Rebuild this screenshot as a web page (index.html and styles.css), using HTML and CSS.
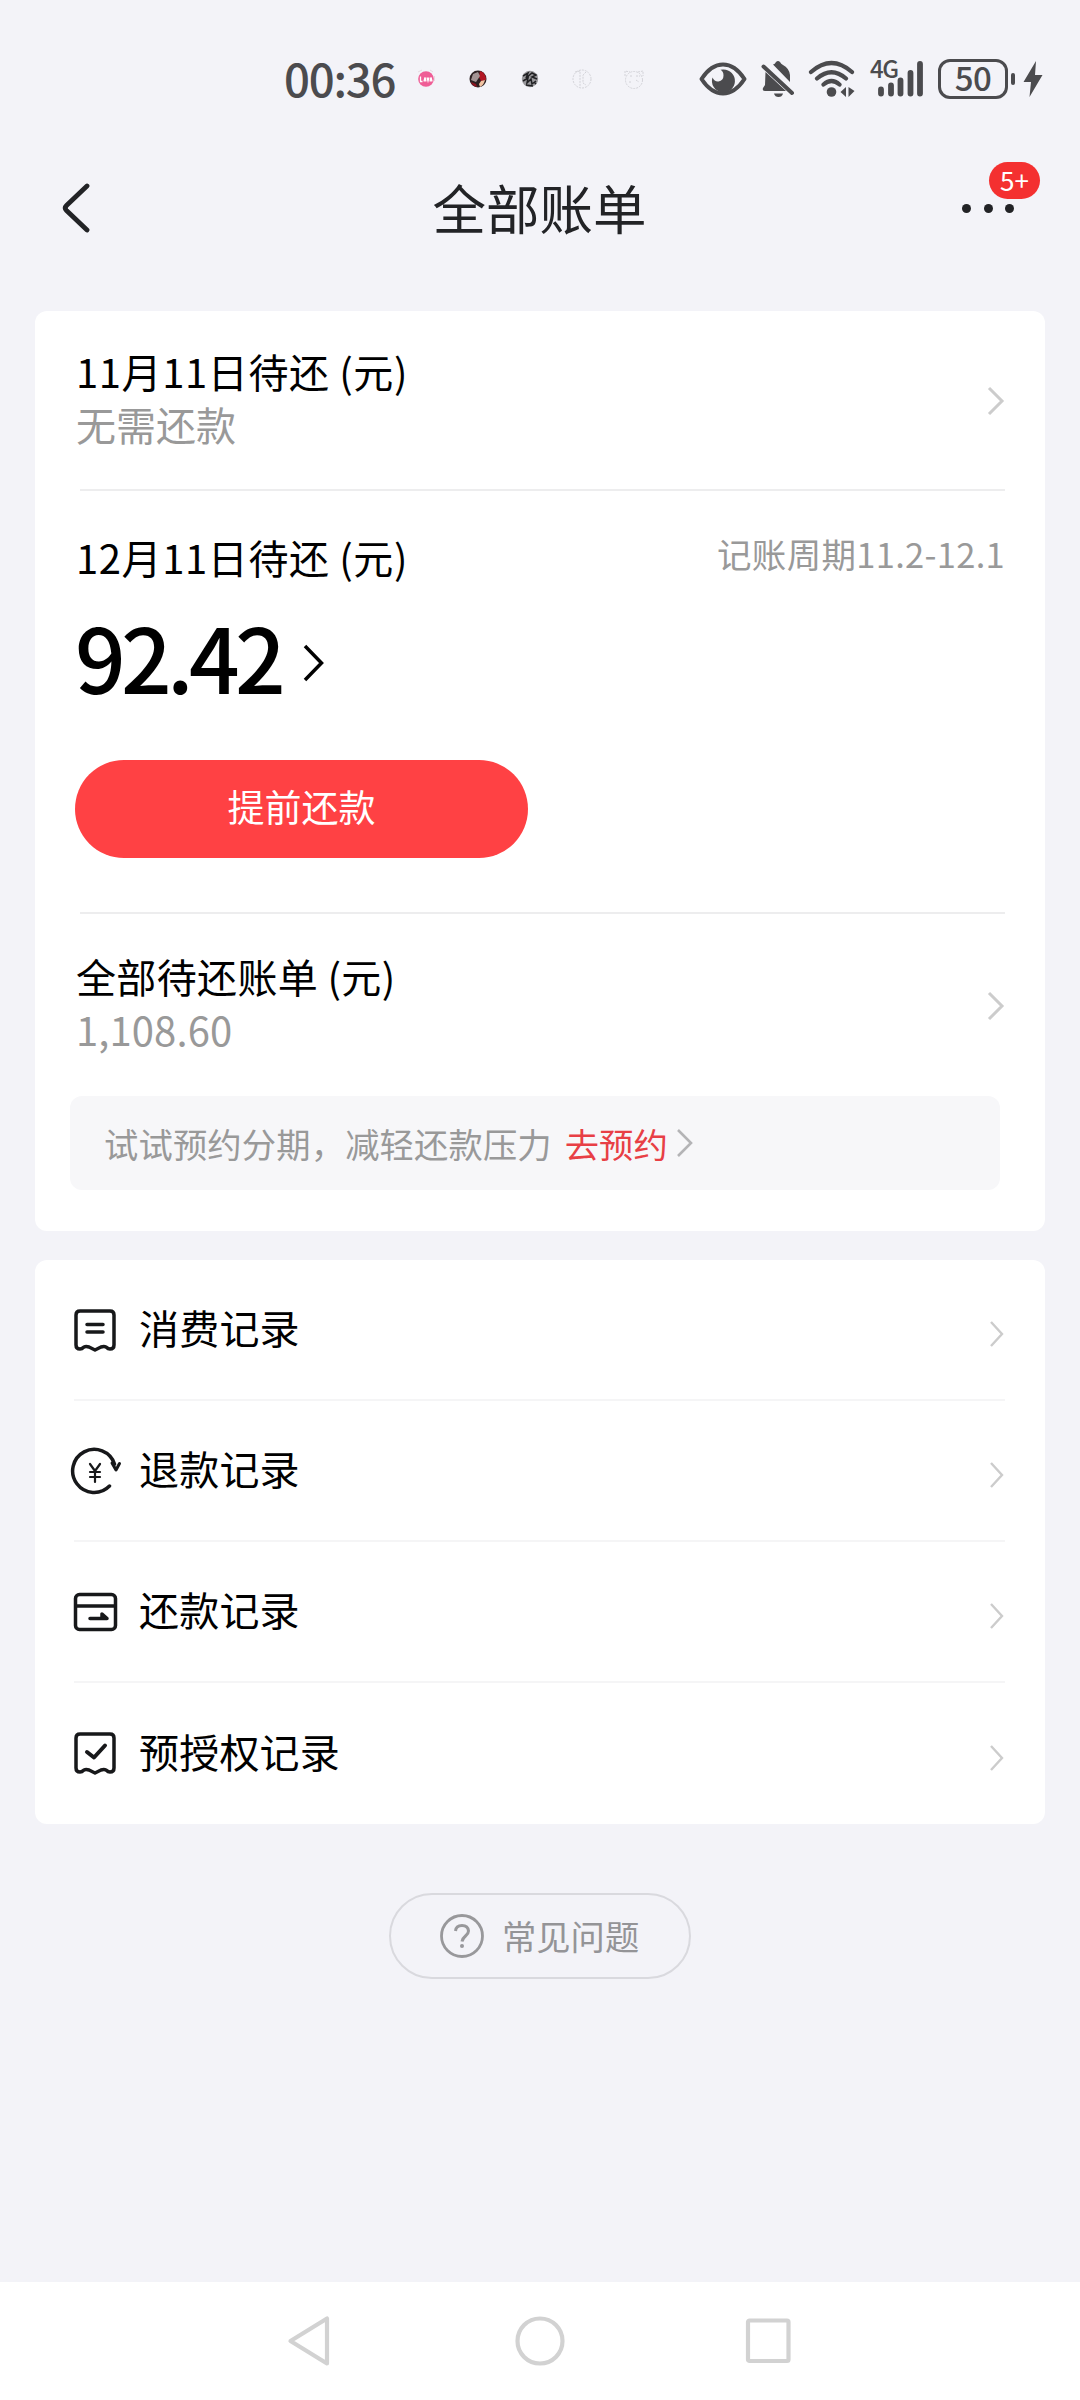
FILE: index.html
```html
<!DOCTYPE html>
<html lang="zh-CN">
<head>
<meta charset="utf-8">
<title>全部账单</title>
<link rel="stylesheet" href="styles.css">
</head>
<body>
<div class="screen">
  <div class="status">
    <div class="clock">00:36</div>
    <div class="notices">
      <svg width="20" height="20" viewBox="0 0 20 20"><circle cx="10" cy="10" r="7.8" fill="#ef5d96"/><path d="M4.500 7.500v5h2M8 12.500l1-4 1 4M11 8.500l1 3.500 1-3.500M14 12.500l1-4 1 4" fill="none" stroke="#fff" stroke-width="1.300"/><path d="M2 3l4-2M14 1l3 2M18.500 7v5" stroke="#e7d7e0"/></svg>
      <svg width="20" height="20" viewBox="0 0 20 20"><circle cx="10" cy="10" r="8.500" fill="#2c2022"/><path d="M12 2a8.500 8.500 0 0 1 6 9l-5 1-2-4z" fill="#b31624"/><path d="M5 5l5-2 2 4-4 6-5-2z" fill="#a39494"/><path d="M3 13l5 2 1 3q-5-1-6-5z" fill="#8d1420"/><path d="M13 12l4-1q-1 5-5 7l-1-3z" fill="#f2c3a2"/></svg>
      <svg width="20" height="20" viewBox="0 0 20 20"><circle cx="10" cy="10" r="8.200" fill="#98979b"/><path d="M3 7l5-3-2 5 6-5 4 2-4 2 5 2M3 12l5-3-1 5 4-4 1 5 4-3M6 16l7 1M14 13l2 2" fill="none" stroke="#202023" stroke-width="1.500"/></svg>
      <svg width="20" height="20" viewBox="0 0 20 20"><g fill="none" stroke="#cfcfd5" stroke-width=".9" stroke-dasharray="2 1"><circle cx="10" cy="10" r="9"/><path d="M3 3l5-1v16M14 3l-3 3v8l3 2"/></g></svg>
      <svg width="20" height="20" viewBox="0 0 20 20"><g fill="none" stroke="#cfcfd5" stroke-width=".9" stroke-dasharray="2 1"><circle cx="10" cy="11" r="8.500"/><path d="M1 7V2l5 1M14 3l5-1v5M6 7h3M12 7h4M5 13h3M12 11l3 2"/></g></svg>
    </div>
    <svg class="eye" width="48" height="36" viewBox="0 0 48 36"><path d="M2.500 18Q12 3.500 24 3.500T45.500 18Q36 32.500 24 32.500T2.500 18z" fill="none" stroke="#4b4b4e" stroke-width="4" stroke-linejoin="round"/><path d="M24 8.500a11.500 11.500 0 1 1-10.500 8q2 4.500 6 4 5-1 5-6 0-4-3-5.700z" fill="#4b4b4e"/></svg>
    <svg class="bell" width="34" height="38" viewBox="0 0 34 38"><g fill="#4b4b4e"><path d="M4.500 12L25 31H4Q1 31 2 28L4 25z"/><path d="M12 4.500Q14 4 15 2q2-2 4 0 1 2 3 3 6 3 7 10v7z"/><path d="M13 33.500h9q-1 3.500-4.500 3.500T13 33.500z"/></g><path d="M2.500 6.500L31 33" stroke="#4b4b4e" stroke-width="4" stroke-linecap="round"/></svg>
    <svg class="wifi" width="48" height="38" viewBox="0 0 48 38"><g fill="none" stroke="#4b4b4e" stroke-width="4.200" stroke-linecap="round"><path d="M3 12Q23.500-6 44 12M9 18.500Q23.500 6 38 18.500M15.500 24.500Q23.500 17.500 31.500 24.500"/></g><circle cx="23.500" cy="32" r="4.800" fill="#4b4b4e"/><path d="M38 27v10l-5.500-5zM40.500 27l6 4-6 6z" fill="#4b4b4e"/></svg>
    <div class="signal">
      <span class="net">4G</span>
      <svg width="50" height="38" viewBox="0 0 50 38"><path d="M8 29.500v4M18 25.500v8M27.500 20.500v13M37.500 13v20.500M47 4v29.500" stroke="#4b4b4e" stroke-width="5.800" stroke-linecap="round"/></svg>
    </div>
    <div class="battery">50</div>
    <div class="nub"></div>
    <svg class="bolt" width="20" height="38" viewBox="0 0 20 38"><path d="M13 1L.5 22H8L6.500 37 19.500 15H12z" fill="#4b4b4e"/></svg>
  </div>

  <div class="header">
    <svg class="back" width="28" height="50" viewBox="0 0 28 50"><path d="M25 3L4.500 22.500Q2 25 4.500 27.500L25 47" fill="none" stroke="#222326" stroke-width="4.800" stroke-linecap="round"/></svg>
    <h1>全部账单</h1>
    <div class="more">
      <i></i><i></i><i></i>
      <span class="badge">5+</span>
    </div>
  </div>

  <div class="card bills">
    <div class="row first">
      <div><p class="label">11月11日待还 (元)</p><p class="sub">无需还款</p></div>
      <svg class="chev" width="20" height="34" viewBox="0 0 20 34"><path d="M4 4l13 13L4 30"/></svg>
    </div>
    <div class="due">
      <div class="duehead"><p class="label">12月11日待还 (元)</p><p class="cycle">记账周期11.2-12.1</p></div>
      <div class="amount"><span>92.42</span><svg width="24" height="40" viewBox="0 0 24 40"><path d="M3 3l16.500 17L3 37" fill="none" stroke="#000" stroke-width="3.500"/></svg></div>
      <div class="pay">提前还款</div>
    </div>
    <div class="row total">
      <div><p class="label wide">全部待还账单 (元)</p><p class="sub money">1,108.60</p></div>
      <svg class="chev" width="20" height="34" viewBox="0 0 20 34"><path d="M4 4l13 13L4 30"/></svg>
    </div>
    <div class="tip"><span>试试预约分期，减轻还款压力</span><span class="go">去预约</span><svg width="20" height="34" viewBox="0 0 20 34"><path d="M3 4l13 13L3 30" fill="none" stroke="#b4b4b6" stroke-width="2.600"/></svg></div>
  </div>

  <div class="card list">
    <div class="item">
      <svg class="ico" width="52" height="52" viewBox="0 0 52 52"><path d="M6 41V11Q6 7 10 7H40Q44 7 44 11V41Q44 45 40 45 38 45 36 43 34 42 31 43L25 46 19 43Q16 42 14 43 12 45 10 45 6 45 6 41z"/><path d="M17 20.500h16M17 28h16"/></svg>
      <p>消费记录</p><svg class="chev small" width="20" height="30" viewBox="0 0 20 30"><path d="M6 3l11 12L6 27"/></svg>
    </div>
    <div class="item">
      <svg class="ico" width="52" height="52" viewBox="0 0 52 52"><path d="M39.500 41A21.500 21.500 0 1 1 44.500 19"/><path d="M42 18l4 7 3.500-6.500" stroke-width="3"/><path d="M20 19l5 7 5-7M25 26v11M20 27h10M20 32h10" stroke-width="2.200"/></svg>
      <p>退款记录</p><svg class="chev small" width="20" height="30" viewBox="0 0 20 30"><path d="M6 3l11 12L6 27"/></svg>
    </div>
    <div class="item">
      <svg class="ico" width="52" height="52" viewBox="0 0 52 52"><rect x="5.500" y="8.500" width="40" height="35" rx="4"/><path d="M6 20h39"/><path d="M20 32.500h17l-5-4.500v3"/></svg>
      <p>还款记录</p><svg class="chev small" width="20" height="30" viewBox="0 0 20 30"><path d="M6 3l11 12L6 27"/></svg>
    </div>
    <div class="item">
      <svg class="ico" width="52" height="52" viewBox="0 0 52 52"><path d="M6 40V10Q6 6 10 6H40Q44 6 44 10V40Q44 44 40 44 38 44 36 42 34 41 31 42L25 45 19 42Q16 41 14 42 12 44 10 44 6 44 6 40z"/><path d="M17 24l7 5.500L35 17.500" stroke-width="4"/></svg>
      <p>预授权记录</p><svg class="chev small" width="20" height="30" viewBox="0 0 20 30"><path d="M6 3l11 12L6 27"/></svg>
    </div>
  </div>

  <div class="faq">
    <svg width="46" height="46" viewBox="0 0 46 46"><circle cx="23" cy="23" r="20.500" fill="none" stroke="#98989b" stroke-width="2.800"/><path d="M16.500 18Q17 12.500 23 12.500T29.500 18Q29.500 20.500 26.500 23T23 28.500" fill="none" stroke="#98989b" stroke-width="3"/><circle cx="23" cy="33" r="2" fill="#98989b"/></svg>
    <span>常见问题</span>
  </div>

  <div class="nav">
    <svg width="50" height="54" viewBox="0 0 50 54"><path d="M41 4.500v45L4.500 27z"/></svg>
    <svg width="50" height="54" viewBox="0 0 50 54"><circle cx="25" cy="27" r="22.500"/></svg>
    <svg width="50" height="54" viewBox="0 0 50 54"><rect x="4" y="6.500" width="40.500" height="40.500" rx="1.500"/></svg>
  </div>
</div>
</body>
</html>
```
FILE: styles.css
```css
* { box-sizing: border-box; }
body {
  margin: 0;
  background: #f3f3f8;
  font-family: "Noto Sans CJK SC", "Noto Sans", sans-serif;
  color: #000;
}
p, h1 { margin: 0; font-weight: 400; white-space: nowrap; }
svg { display: block; flex: none; }
.screen { width: 1080px; height: 2400px; display: flex; flex-direction: column; overflow: hidden; }

.status { height: 158px; flex: none; display: flex; align-items: center; padding-left: 284px; color: #4b4b4e; }
.clock { width: 132px; font-size: 45.500px; font-weight: 500; line-height: 60px; letter-spacing: -1.200px; padding-bottom: 4px; white-space: nowrap; }
.notices { display: flex; gap: 32px; width: 283px; }
.eye { margin-right: 14px; }
.bell { margin-right: 13px; }
.wifi { margin-right: 14px; }
.signal { position: relative; width: 54px; padding-left: 3px; margin-right: 14px; }
.net { position: absolute; left: 0; top: -6px; font-size: 24px; line-height: 28px; font-weight: 500; letter-spacing: -1.500px; }
.battery { width: 70px; height: 40px; border: 3px solid #4b4b4e; border-radius: 12px; font-size: 33px; font-weight: 500; line-height: 31px; text-align: center; letter-spacing: -0.500px; }
.nub { width: 4px; height: 12px; border-radius: 2px; background: #4b4b4e; margin: 0 8px 0 3px; }

.header { height: 153px; flex: none; display: flex; justify-content: space-between; align-items: flex-start; padding: 0 66px 0 62px; color: #222326; }
.back { margin-top: 25px; }
h1 { font-size: 53.500px; line-height: 80px; margin: 9px 0 0 27px; }
.more { position: relative; display: flex; gap: 12.500px; margin-top: 46px; }
.more i { width: 9px; height: 9px; border-radius: 50%; background: #222326; }
.badge { position: absolute; left: 27px; top: -42px; width: 51px; height: 37px; border-radius: 19px; background: #f43030; color: #fff; font-size: 26px; line-height: 35px; text-align: center; }

.card { width: 1010px; flex: none; margin-left: 35px; background: #fff; border-radius: 12px; }
.bills { height: 920px; padding: 0 40px 0 41px; }
.row { display: flex; justify-content: space-between; }
.first { height: 178px; padding-top: 30px; }
.first .chev { margin-top: 43px; }
.label { font-size: 40px; line-height: 60px; letter-spacing: 0.600px; }
.wide { letter-spacing: 0.350px; }
.sub { font-size: 40px; line-height: 60px; color: #999; margin-top: -7px; }
.chev { fill: none; stroke: #ccc; stroke-width: 3; }
.due { height: 425px; border-top: 2px solid #ededee; border-bottom: 2px solid #ededee; margin: 0 0 0 4px; padding-top: 36px; }
.duehead { display: flex; justify-content: space-between; margin-left: -4px; }
.cycle { font-size: 34.500px; line-height: 52px; letter-spacing: 0.300px; color: #999; }
.amount { display: flex; align-items: center; gap: 21px; height: 96px; margin: 28px 0 0 -5px; }
.amount span { font-size: 89px; line-height: 96px; font-weight: 500; letter-spacing: -4.700px; padding-bottom: 14px; }
.pay { width: 453px; height: 98px; margin: 49px 0 0 -5px; border-radius: 49px; background: #ff4144; color: #fff; font-size: 37px; line-height: 93px; text-align: center; }
.total { height: 182px; padding-top: 32px; }
.total .chev { margin-top: 43px; }
.money { letter-spacing: 0.100px; }
.tip { width: 930px; height: 94px; margin-left: -6px; padding-left: 34px; border-radius: 12px; background: #f7f7f9; color: #999; display: flex; align-items: center; font-size: 34.300px; white-space: nowrap; }
.tip span:first-child { letter-spacing: 0.150px; }
.go { color: #e83f45; margin: 0 7px 0 13px; }

.list { height: 564px; margin-top: 29px; padding: 0 40px 0 39px; }
.item { height: 141px; display: flex; align-items: center; border-bottom: 2px solid #f5f5f6; }
.item:last-child { border-bottom: 0; }
.ico { margin-left: -4px; fill: none; stroke: #17181a; stroke-width: 3.500; stroke-linejoin: round; stroke-linecap: round; }
.item p { font-size: 40px; line-height: 60px; margin-left: 17px; padding-bottom: 6px; letter-spacing: 0.200px; flex: 1; }
.small { margin-top: 8px; stroke-width: 2.400; }

.faq { width: 302px; height: 86px; flex: none; margin: 69px 0 0 389px; padding-left: 48px; border: 2px solid #d9d9de; border-radius: 43px; display: flex; align-items: center; gap: 17px; color: #949497; font-size: 34.300px; white-space: nowrap; }
.faq span { padding-bottom: 2px; }

.nav { margin-top: auto; height: 118px; flex: none; background: #fff; display: flex; justify-content: center; gap: 179px; padding-top: 32px; }
.nav svg { fill: none; stroke: #d2d2d2; stroke-width: 4.200; stroke-linejoin: round; }
```
